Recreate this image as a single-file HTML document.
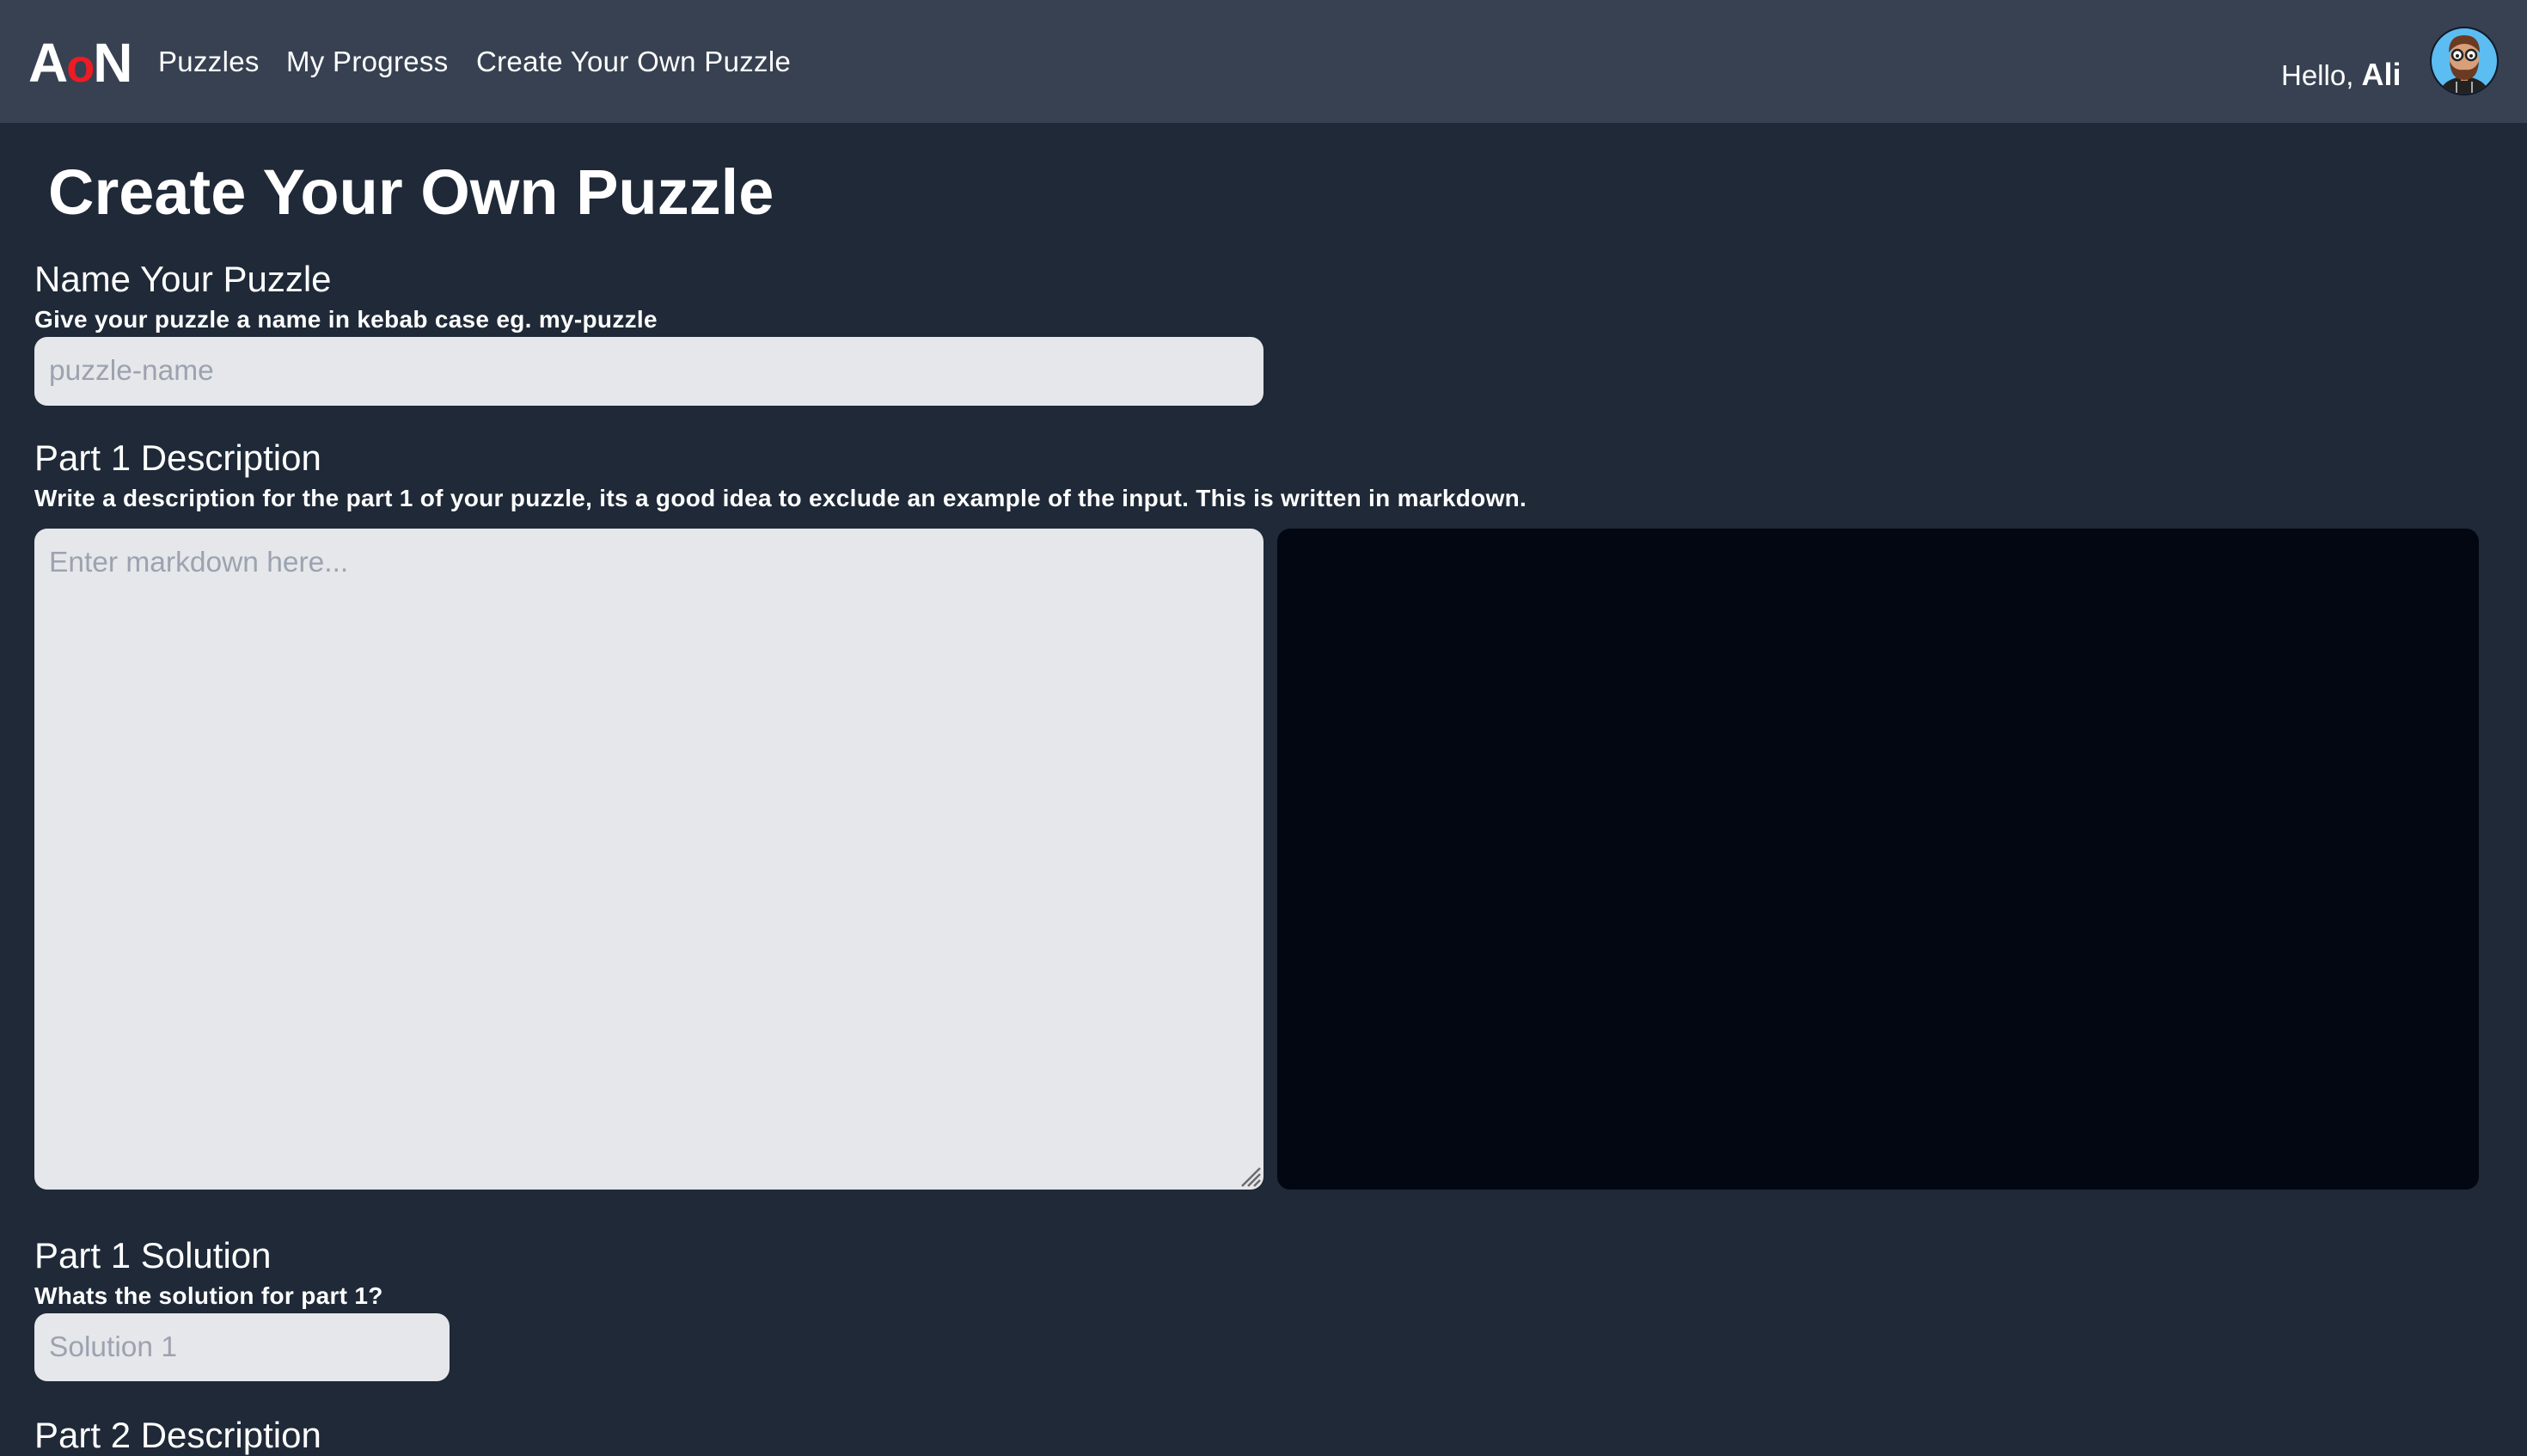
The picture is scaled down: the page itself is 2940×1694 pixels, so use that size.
<!DOCTYPE html>
<html><head><meta charset="utf-8"><style>
*{margin:0;padding:0;box-sizing:border-box}
body{width:2940px;height:1688px;background:#1f2937;font-family:"Liberation Sans",sans-serif;color:#fff;overflow:hidden;position:relative}
.hdr{position:absolute;left:0;top:0;width:2940px;height:143px;background:#374151}
.a{position:absolute;white-space:nowrap}
.nav{font-size:33px;top:53px;letter-spacing:0.3px}
h2{position:absolute;font-weight:normal;font-size:42px;left:40px;white-space:nowrap}
.sub{position:absolute;font-weight:bold;font-size:28px;left:40px;white-space:nowrap;letter-spacing:0.3px}
.inp{position:absolute;background:#e5e7eb;border-radius:15px;color:#9ca3af;font-size:33.5px;padding-left:17px}
</style></head><body>
<div class="hdr"></div>
<div class="a" style="left:33px;top:36px;font-size:64px;font-weight:bold;letter-spacing:-2px">A<span style="color:#ed1c24;font-size:54px">o</span>N</div>
<div class="a nav" style="left:184px">Puzzles</div>
<div class="a nav" style="left:333px">My Progress</div>
<div class="a nav" style="left:554px">Create Your Own Puzzle</div>
<div class="a" style="left:2654px;top:66px;font-size:33px">Hello, <b style="font-size:36px">Ali</b></div>
<svg class="a" style="left:2827px;top:31px" width="80" height="80" viewBox="0 0 80 80">
<defs><clipPath id="c"><circle cx="40" cy="40" r="38"/></clipPath></defs>
<circle cx="40" cy="40" r="40" fill="#111827"/>
<g clip-path="url(#c)"><rect width="80" height="80" fill="#5bbdf2"/>
<path d="M10 80 Q14 60 40 58 Q66 60 70 80Z" fill="#222"/>
<rect x="36" y="55" width="8" height="8" fill="#c98f6a"/>
<ellipse cx="40" cy="38" rx="17" ry="21" fill="#d8a07a"/>
<path d="M23 40 Q24 62 40 62 Q56 62 57 40 Q52 52 40 50 Q28 52 23 40Z" fill="#6b3a22"/>
<path d="M22 30 Q22 10 40 10 Q58 10 58 30 Q50 20 40 20 Q30 20 22 30Z" fill="#6b3a22"/>
<circle cx="32" cy="33" r="6" fill="#fff" stroke="#222" stroke-width="2.5"/>
<circle cx="48" cy="33" r="6" fill="#fff" stroke="#222" stroke-width="2.5"/>
<circle cx="32" cy="34" r="2" fill="#222"/><circle cx="48" cy="34" r="2" fill="#222"/>
<line x1="31" y1="64" x2="31" y2="78" stroke="#ddd" stroke-width="1.5"/><line x1="49" y1="64" x2="49" y2="78" stroke="#ddd" stroke-width="1.5"/>
</g></svg>
<div class="a" style="left:56px;top:181px;font-size:74px;font-weight:bold">Create Your Own Puzzle</div>
<h2 style="top:301px">Name Your Puzzle</h2>
<div class="sub" style="top:356px">Give your puzzle a name in kebab case eg. my-puzzle</div>
<div class="inp" style="left:40px;top:392px;width:1430px;height:80px;line-height:80px">puzzle-name</div>
<h2 style="top:509px">Part 1 Description</h2>
<div class="sub" style="top:564px">Write a description for the part 1 of your puzzle, its a good idea to exclude an example of the input. This is written in markdown.</div>
<div class="inp" style="left:40px;top:615px;width:1430px;height:769px;padding-top:20px;line-height:40px">Enter markdown here...
<svg style="position:absolute;right:2px;bottom:2px" width="26" height="26" viewBox="0 0 26 26"><path d="M24 3 L3 24 M24 10 L10 24 M24 17 L17 24" stroke="#6b6b6b" stroke-width="2.5"/></svg></div>
<div class="a" style="left:1486px;top:615px;width:1398px;height:769px;background:#030712;border-radius:15px"></div>
<h2 style="top:1437px">Part 1 Solution</h2>
<div class="sub" style="top:1492px">Whats the solution for part 1?</div>
<div class="inp" style="left:40px;top:1528px;width:483px;height:79px;line-height:79px">Solution 1</div>
<h2 style="top:1646px">Part 2 Description</h2>
</body></html>
